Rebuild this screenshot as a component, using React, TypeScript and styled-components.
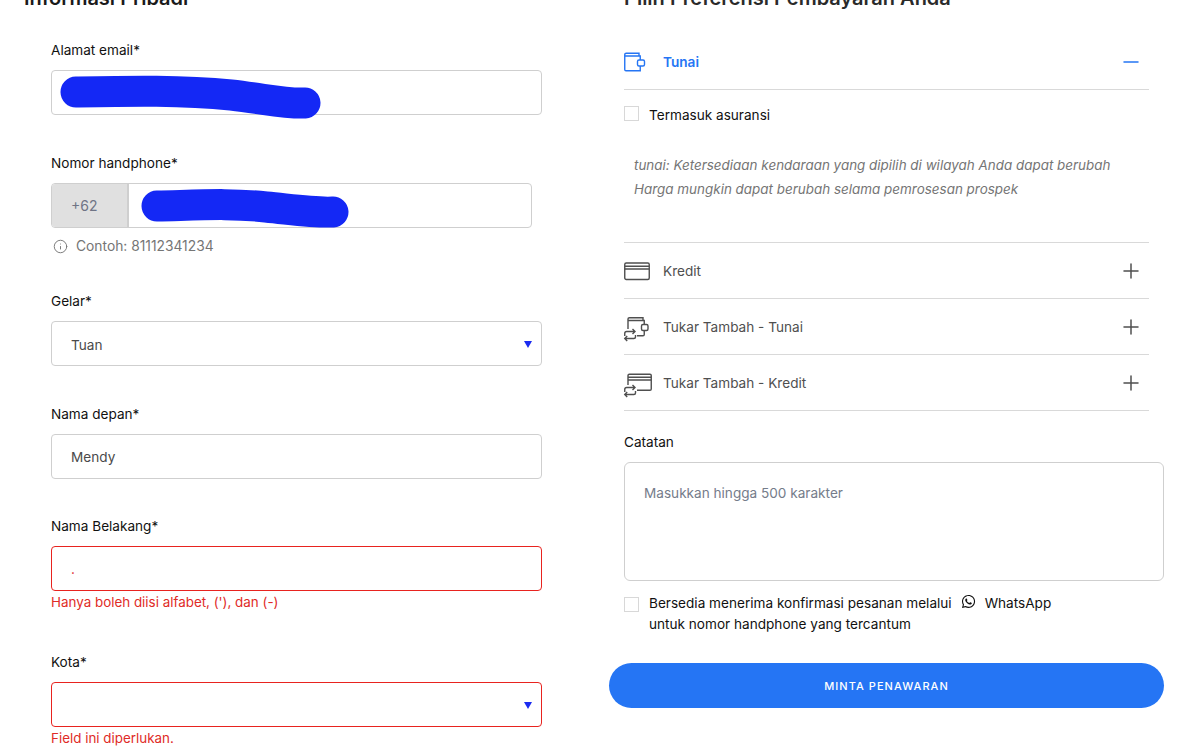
import React from 'react';
import styled, { createGlobalStyle } from 'styled-components';
import { Info, Minus, Plus } from 'lucide-react';
import { FaWhatsapp } from 'react-icons/fa';

const GlobalStyle = createGlobalStyle`
  html, body {
    margin: 0;
    padding: 0;
    height: 753px;
    overflow: hidden;
    background: #fff;
    font-family: "Inter", "Liberation Sans", sans-serif;
  }
  * { box-sizing: border-box; }
`;

// the page is scrolled a little, so the headings are cut by the top edge
const Page = styled.div`
  display: grid;
  grid-template-columns: 609px 582px;
  width: 1191px;
  margin-top: -14px;
`;

const LeftColumn = styled.section`
  padding-left: 24px;
`;

const RightColumn = styled.section``;

const Heading = styled.h2`
  margin: 0;
  font-size: 20px;
  line-height: 24px;
  font-weight: 600;
  color: #1a1a1a;
`;

const RightHeading = styled(Heading)`
  margin-left: 15px;
  color: #2a2a2a;
`;

const Form = styled.div`
  padding: 30px 0 0 27px;
  width: 518px;
`;

const Field = styled.div<{ $gap?: number }>`
  margin-bottom: ${(p) => p.$gap ?? 38}px;
`;

const Label = styled.div`
  font-size: 13.6px;
  line-height: 20px;
  color: #111;
  margin-bottom: 10px;
`;

const Box = styled.div<{ $error?: boolean; $width?: number; $select?: boolean }>`
  position: relative;
  display: flex;
  align-items: center;
  height: 45px;
  width: ${(p) => p.$width ?? 491}px;
  padding-left: 19px;
  padding-top: ${(p) => (p.$select ? 2 : 0)}px;
  border: 1px solid ${(p) => (p.$error ? '#e8231f' : '#cfcfcf')};
  border-radius: 4px;
  background: #fff;
  font-size: 13.6px;
  color: ${(p) => (p.$error ? '#e02b27' : '#4a4a4a')};
`;

const PhoneBox = styled(Box)`
  padding-left: 0;
`;

const Prefix = styled.div`
  display: flex;
  align-items: center;
  align-self: stretch;
  width: 77px;
  padding-left: 19px;
  border-right: 2px solid #cfcfcf;
  border-radius: 3px 0 0 3px;
  background-color: #e0e0e0;
  background-image: radial-gradient(#ececec 0.6px, transparent 0.7px);
  background-size: 4px 4px;
  color: #6f7485;
  font-size: 14px;
`;

const Scribble = styled.svg`
  position: absolute;
  left: -1px;
  top: -1px;
  width: 100%;
  height: 100%;
  overflow: visible;
  pointer-events: none;
`;

const Caret = styled.span`
  position: absolute;
  right: 9px;
  top: 50%;
  margin-top: -3px;
  width: 0;
  height: 0;
  border-left: 4px solid transparent;
  border-right: 4px solid transparent;
  border-top: 7px solid #1b2bf0;
`;

const Hint = styled.div`
  display: flex;
  align-items: center;
  gap: 8px;
  height: 20px;
  margin-top: 8px;
  padding-left: 2px;
  font-size: 13.8px;
  color: #757575;
`;

const ErrorText = styled.div`
  margin-top: 1px;
  font-size: 13.4px;
  line-height: 20px;
  color: #e02b27;
`;

const Accordion = styled.div`
  width: 525px;
  margin: 25px 0 0 15px;
`;

const AccordionRow = styled.div<{ $active?: boolean; $height?: number }>`
  display: flex;
  align-items: center;
  height: ${(p) => p.$height ?? 56}px;
  border-bottom: 1px solid #d9d9d9;
  color: ${(p) => (p.$active ? '#2575f4' : '#4f4f4f')};
  font-size: 13.6px;
  font-weight: ${(p) => (p.$active ? 600 : 400)};
`;

const RowIcon = styled.svg`
  flex: none;
  width: 26px;
  height: 26px;
  margin-right: 13px;
  overflow: visible;
  fill: none;
  stroke: currentColor;
  stroke-width: 1.4;
`;

const RowLabel = styled.span`
  flex: 1;
`;

const Toggle = styled.span`
  display: flex;
  margin-right: 6px;
`;

const AccordionBody = styled.div`
  height: 153px;
  padding-top: 16px;
  border-bottom: 1px solid #d9d9d9;
`;

const CheckRow = styled.div`
  display: flex;
  gap: 10px;
  font-size: 13.6px;
  line-height: 18px;
  color: #111;
`;

const CheckBox = styled.span`
  flex: none;
  width: 15px;
  height: 15px;
  border: 1px solid #d8d8d8;
  background: #fff;
`;

const Note = styled.p`
  margin: 29px 0 0 10px;
  font-size: 13.45px;
  line-height: 24px;
  font-style: italic;
  color: #757575;
`;

const NotesBlock = styled.div`
  margin: 21px 0 0 15px;
`;

const NotesLabel = styled.div`
  font-size: 13.6px;
  line-height: 20px;
  color: #111;
  margin-bottom: 10px;
`;

const TextArea = styled.div`
  width: 540px;
  height: 119px;
  padding: 20px 19px;
  border: 1px solid #cfcfcf;
  border-radius: 6px;
  font-size: 13.6px;
  line-height: 20px;
  color: #757c8a;
`;

const Consent = styled(CheckRow)`
  margin-top: 12px;
  line-height: 21px;

  ${CheckBox} {
    margin-top: 4px;
  }
`;

const InlineWhatsapp = styled.span`
  display: inline-flex;
  vertical-align: -1px;
  margin: 0 9px;
`;

const SubmitButton = styled.button`
  display: block;
  width: 555px;
  height: 45px;
  margin-top: 28px;
  border: 0;
  border-radius: 23px;
  background: #2575f4;
  color: #fff;
  font-family: inherit;
  font-size: 11px;
  font-weight: 500;
  letter-spacing: 1.05px;
`;

const WalletIcon = () => (
  <RowIcon viewBox="0 0 26 26">
    <path d="M.75 7V5.500C.75 4.700 1.400 4.250 2.200 4.250H15V7" />
    <path d="M.75 7H16.250V11M.75 7V20.500C.75 21.200 1.300 21.750 2 21.750H16.250V17" />
    <rect x="13.500" y="11" width="7" height="6" rx="1.500" />
  </RowIcon>
);

const CardIcon = () => (
  <RowIcon viewBox="0 0 26 26">
    <rect x=".75" y="5" width="24.500" height="16.500" rx="1.500" />
    <path d="M.75 8.250H25.250M.75 11H25.250" />
  </RowIcon>
);

// two arrows that swap, drawn under the wallet or the card
const TradeArrows = () => (
  <path d="M.75 22V19.500C.75 18.300 1.500 17.500 2.700 17.500H11M8.500 15 11 17.500 8.500 20M11.500 21V23C11.500 24 10.800 24.500 9.800 24.500H.75M3.200 22 .75 24.500 3.200 27" />
);

const TradeWalletIcon = () => (
  <RowIcon viewBox="0 0 26 26">
    <path d="M4 15V5C4 4.200 4.600 3.750 5.400 3.750H19V6.500" />
    <path d="M4 6.500H20.250V10.500M13 21.750H19C19.800 21.750 20.250 21.200 20.250 20.500V16.500" />
    <rect x="17.500" y="10.500" width="6.500" height="6" rx="1.500" />
    <TradeArrows />
  </RowIcon>
);

const TradeCardIcon = () => (
  <RowIcon viewBox="0 0 26 26">
    <path d="M4 15V5.500C4 4.700 4.600 4.250 5.400 4.250H26C26.800 4.250 27.250 4.700 27.250 5.500V19C27.250 19.800 26.800 20.250 26 20.250H13" />
    <path d="M4 7.250H27.250M4 10H27.250" />
    <TradeArrows />
  </RowIcon>
);

const App: React.FC = () => (
  <>
    <GlobalStyle />
    <Page>
      <LeftColumn>
        <Heading>Informasi Pribadi</Heading>
        <Form>
          <Field>
            <Label>Alamat email*</Label>
            <Box>
              <Scribble>
                <path d="M25 22C80 21 130 20 180 25C215 29 235 34 254 33" fill="none" stroke="#1428f5" strokeWidth="31" strokeLinecap="round" />
              </Scribble>
            </Box>
          </Field>
          <Field $gap={35}>
            <Label>Nomor handphone*</Label>
            <PhoneBox $width={481}>
              <Prefix>+62</Prefix>
              <Scribble>
                <path d="M106 23C150 22 180 20 215 24C245 27 265 30 282 29" fill="none" stroke="#1428f5" strokeWidth="31" strokeLinecap="round" />
              </Scribble>
            </PhoneBox>
            <Hint>
              <Info size={15} strokeWidth={1.5} />
              Contoh: 81112341234
            </Hint>
          </Field>
          <Field>
            <Label>Gelar*</Label>
            <Box $select>
              Tuan
              <Caret />
            </Box>
          </Field>
          <Field $gap={37}>
            <Label>Nama depan*</Label>
            <Box>Mendy</Box>
          </Field>
          <Field $gap={40}>
            <Label>Nama Belakang*</Label>
            <Box $error>.</Box>
            <ErrorText>Hanya boleh diisi alfabet, ('), dan (-)</ErrorText>
          </Field>
          <Field>
            <Label>Kota*</Label>
            <Box $error>
              <Caret />
            </Box>
            <ErrorText>Field ini diperlukan.</ErrorText>
          </Field>
        </Form>
      </LeftColumn>
      <RightColumn>
        <RightHeading>Pilih Preferensi Pembayaran Anda</RightHeading>
        <Accordion>
          <AccordionRow $active $height={55}>
            <WalletIcon />
            <RowLabel>Tunai</RowLabel>
            <Toggle>
              <Minus size={24} strokeWidth={1.5} />
            </Toggle>
          </AccordionRow>
          <AccordionBody>
            <CheckRow>
              <CheckBox />
              Termasuk asuransi
            </CheckRow>
            <Note>
              tunai: Ketersediaan kendaraan yang dipilih di wilayah Anda dapat berubah
              <br />
              Harga mungkin dapat berubah selama pemrosesan prospek
            </Note>
          </AccordionBody>
          <AccordionRow>
            <CardIcon />
            <RowLabel>Kredit</RowLabel>
            <Toggle>
              <Plus size={24} strokeWidth={1.5} />
            </Toggle>
          </AccordionRow>
          <AccordionRow>
            <TradeWalletIcon />
            <RowLabel>Tukar Tambah - Tunai</RowLabel>
            <Toggle>
              <Plus size={24} strokeWidth={1.5} />
            </Toggle>
          </AccordionRow>
          <AccordionRow>
            <TradeCardIcon />
            <RowLabel>Tukar Tambah - Kredit</RowLabel>
            <Toggle>
              <Plus size={24} strokeWidth={1.5} />
            </Toggle>
          </AccordionRow>
        </Accordion>
        <NotesBlock>
          <NotesLabel>Catatan</NotesLabel>
          <TextArea>Masukkan hingga 500 karakter</TextArea>
          <Consent>
            <CheckBox />
            <span>
              Bersedia menerima konfirmasi pesanan melalui
              <InlineWhatsapp>
                <FaWhatsapp size={15} />
              </InlineWhatsapp>
              WhatsApp
              <br />
              untuk nomor handphone yang tercantum
            </span>
          </Consent>
        </NotesBlock>
        <SubmitButton>MINTA PENAWARAN</SubmitButton>
      </RightColumn>
    </Page>
  </>
);

export default App;
